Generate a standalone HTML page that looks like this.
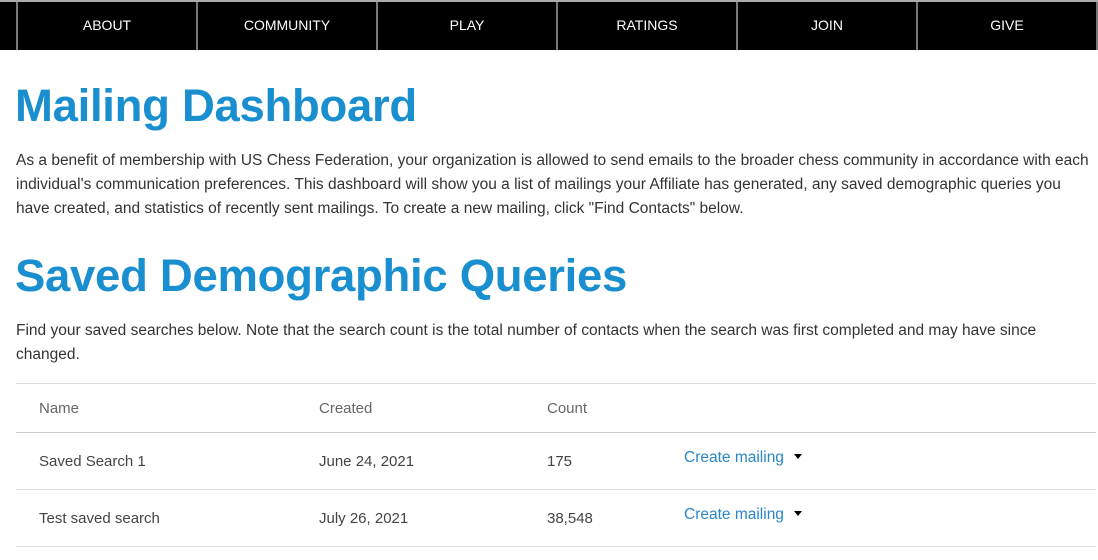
<!DOCTYPE html>
<html><head><meta charset="utf-8"><style>
body{margin:0;background:#fff;font-family:"Liberation Sans",sans-serif;color:#333;width:1098px;height:560px;overflow:hidden;position:relative}
.nav{position:absolute;left:0;top:0;width:1098px;height:50px;background:#000;border-top:2px solid #aaa;box-sizing:border-box}
.nav div{position:absolute;top:0;height:48px;width:180px;border-left:2px solid #777;box-sizing:border-box;color:#fff;font-size:14px;text-align:center;line-height:46px}
h1{position:absolute;left:15px;margin:0;color:#1a8fd0;font-weight:bold;font-size:45.5px;white-space:nowrap;letter-spacing:-0.3px}
p{position:absolute;left:16px;margin:0;font-size:15.5px;line-height:24px;white-space:nowrap;color:#333}
.line{position:absolute;left:16px;width:1080px;height:1px;background:#ddd}
.t{position:absolute;font-size:15px;color:#444;white-space:nowrap}
.h{color:#666}
.a{color:#2a86c8;font-size:15.5px}
.caret{display:inline-block;width:0;height:0;border-left:4.5px solid transparent;border-right:4.5px solid transparent;border-top:5px solid #000;margin-left:10px;vertical-align:3px}
</style></head><body>
<div class="nav">
<div style="left:16px">ABOUT</div><div style="left:196px">COMMUNITY</div><div style="left:376px">PLAY</div><div style="left:556px">RATINGS</div><div style="left:736px">JOIN</div><div style="left:916px">GIVE</div><div style="left:1096px;width:2px"></div>
</div>
<h1 style="top:80px">Mailing Dashboard</h1>
<p style="top:149px">As a benefit of membership with US Chess Federation, your organization is allowed to send emails to the broader chess community in accordance with each<br>individual's communication preferences. This dashboard will show you a list of mailings your Affiliate has generated, any saved demographic queries you<br>have created, and statistics of recently sent mailings. To create a new mailing, click "Find Contacts" below.</p>
<h1 style="top:250px">Saved Demographic Queries</h1>
<p style="top:319px">Find your saved searches below. Note that the search count is the total number of contacts when the search was first completed and may have since<br>changed.</p>
<div class="line" style="top:383px"></div>
<div class="t h" style="left:39px;top:400px">Name</div>
<div class="t h" style="left:319px;top:400px">Created</div>
<div class="t h" style="left:547px;top:400px">Count</div>
<div class="line" style="top:432px;background:#ccc"></div>
<div class="t" style="left:39px;top:453px">Saved Search 1</div>
<div class="t" style="left:319px;top:453px">June 24, 2021</div>
<div class="t" style="left:547px;top:453px">175</div>
<div class="t a" style="left:684px;top:449px">Create mailing<span class="caret"></span></div>
<div class="line" style="top:489px"></div>
<div class="t" style="left:39px;top:510px">Test saved search</div>
<div class="t" style="left:319px;top:510px">July 26, 2021</div>
<div class="t" style="left:547px;top:510px">38,548</div>
<div class="t a" style="left:684px;top:506px">Create mailing<span class="caret"></span></div>
<div class="line" style="top:546px"></div>
</body></html>
